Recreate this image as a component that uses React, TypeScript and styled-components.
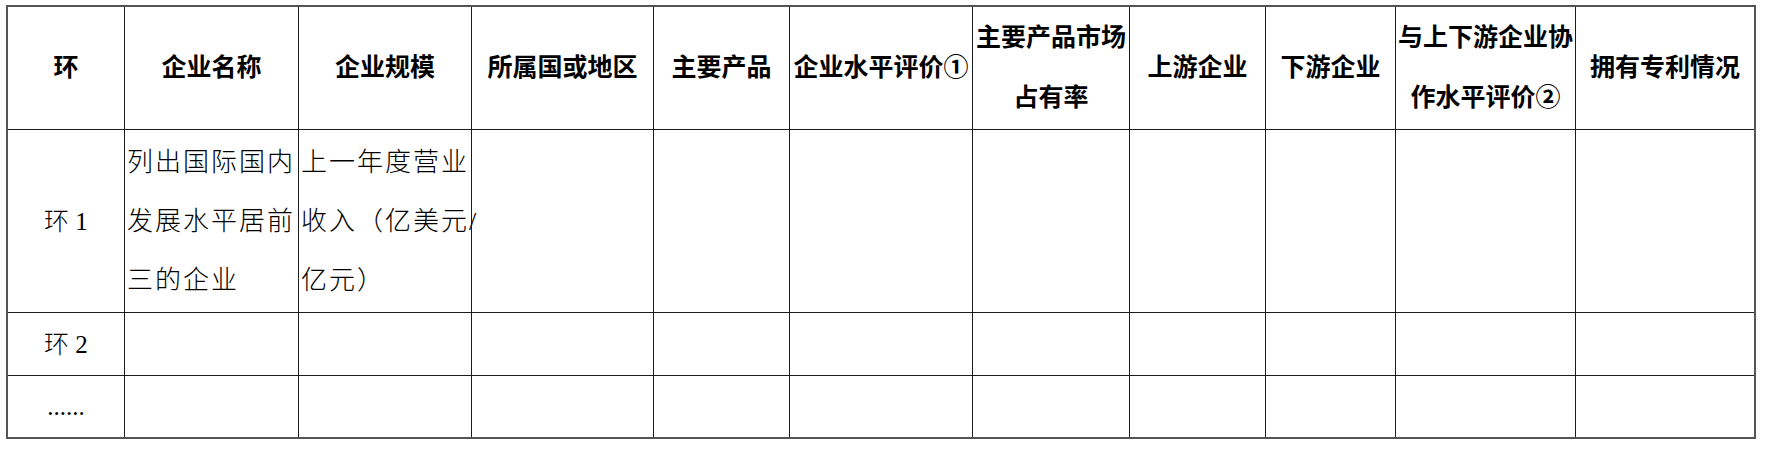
import React from "react";
import styled, { createGlobalStyle } from "styled-components";

const GlobalStyle = createGlobalStyle`
  html, body {
    margin: 0;
    padding: 0;
    background: #ffffff;
  }
`;

const Page = styled.div`
  padding: 5px 0 0 6px;
`;

const Table = styled.table`
  border-collapse: separate;
  border-spacing: 0;
  table-layout: fixed;
  width: 1750px;
  border: 2px solid #555555;
  color: #000000;
  font-family: "Liberation Serif", "Noto Sans CJK SC", serif;

  tr:last-child td {
    border-bottom: none;
  }
`;

const Row = styled.tr<{ $height: number }>`
  height: ${({ $height }) => $height}px;
`;

const HeadCell = styled.th<{ $width: number }>`
  box-sizing: border-box;
  width: ${({ $width }) => $width}px;
  padding: 0;
  border-right: 1px solid #1c1c1c;
  border-bottom: 1px solid #1c1c1c;
  font-size: 25px;
  font-weight: 700;
  line-height: 60px;
  text-align: center;
  vertical-align: middle;
  white-space: nowrap;

  &:last-child {
    border-right: none;
  }
`;

const BodyCell = styled.td<{ $center?: boolean }>`
  box-sizing: border-box;
  padding: 0 0 0 ${({ $center }) => ($center ? 0 : 2)}px;
  border-right: 1px solid #1c1c1c;
  border-bottom: 1px solid #1c1c1c;
  font-size: ${({ $center }) => ($center ? 25 : 26)}px;
  font-weight: 300;
  line-height: 59px;
  letter-spacing: ${({ $center }) => ($center ? 0 : 2)}px;
  text-align: ${({ $center }) => ($center ? "center" : "left")};
  vertical-align: middle;
  white-space: nowrap;

  &:last-child {
    border-right: none;
  }
`;

const Line = styled.span`
  display: block;
`;

interface Column {
  label: string[];
  width: number;
}

interface BodyRow {
  label: string;
  height: number;
  cells: { [col: number]: string[] };
}

const columns: Column[] = [
  { label: ["环"], width: 117 },
  { label: ["企业名称"], width: 174 },
  { label: ["企业规模"], width: 173 },
  { label: ["所属国或地区"], width: 182 },
  { label: ["主要产品"], width: 136 },
  { label: ["企业水平评价①"], width: 183 },
  { label: ["主要产品市场", "占有率"], width: 157 },
  { label: ["上游企业"], width: 136 },
  { label: ["下游企业"], width: 130 },
  { label: ["与上下游企业协", "作水平评价②"], width: 180 },
  { label: ["拥有专利情况"], width: 178 },
];

const rows: BodyRow[] = [
  {
    label: "环 1",
    height: 183,
    cells: {
      1: ["列出国际国内", "发展水平居前", "三的企业"],
      2: ["上一年度营业", "收入（亿美元/", "亿元）"],
    },
  },
  { label: "环 2", height: 63, cells: {} },
  { label: "......", height: 61, cells: {} },
];

const Lines: React.FC<{ lines: string[] }> = ({ lines }) => (
  <>
    {lines.map((text) => (
      <Line key={text}>{text}</Line>
    ))}
  </>
);

export default function App() {
  return (
    <>
      <GlobalStyle />
      <Page>
        <Table>
          <thead>
            <Row $height={123}>
              {columns.map((col) => (
                <HeadCell key={col.label.join("")} $width={col.width}>
                  <Lines lines={col.label} />
                </HeadCell>
              ))}
            </Row>
          </thead>
          <tbody>
            {rows.map((row) => (
              <Row key={row.label} $height={row.height}>
                <BodyCell $center>{row.label}</BodyCell>
                {columns.slice(1).map((col, i) => {
                  const lines = row.cells[i + 1];
                  return (
                    <BodyCell key={col.label.join("")}>
                      {lines ? <Lines lines={lines} /> : null}
                    </BodyCell>
                  );
                })}
              </Row>
            ))}
          </tbody>
        </Table>
      </Page>
    </>
  );
}
